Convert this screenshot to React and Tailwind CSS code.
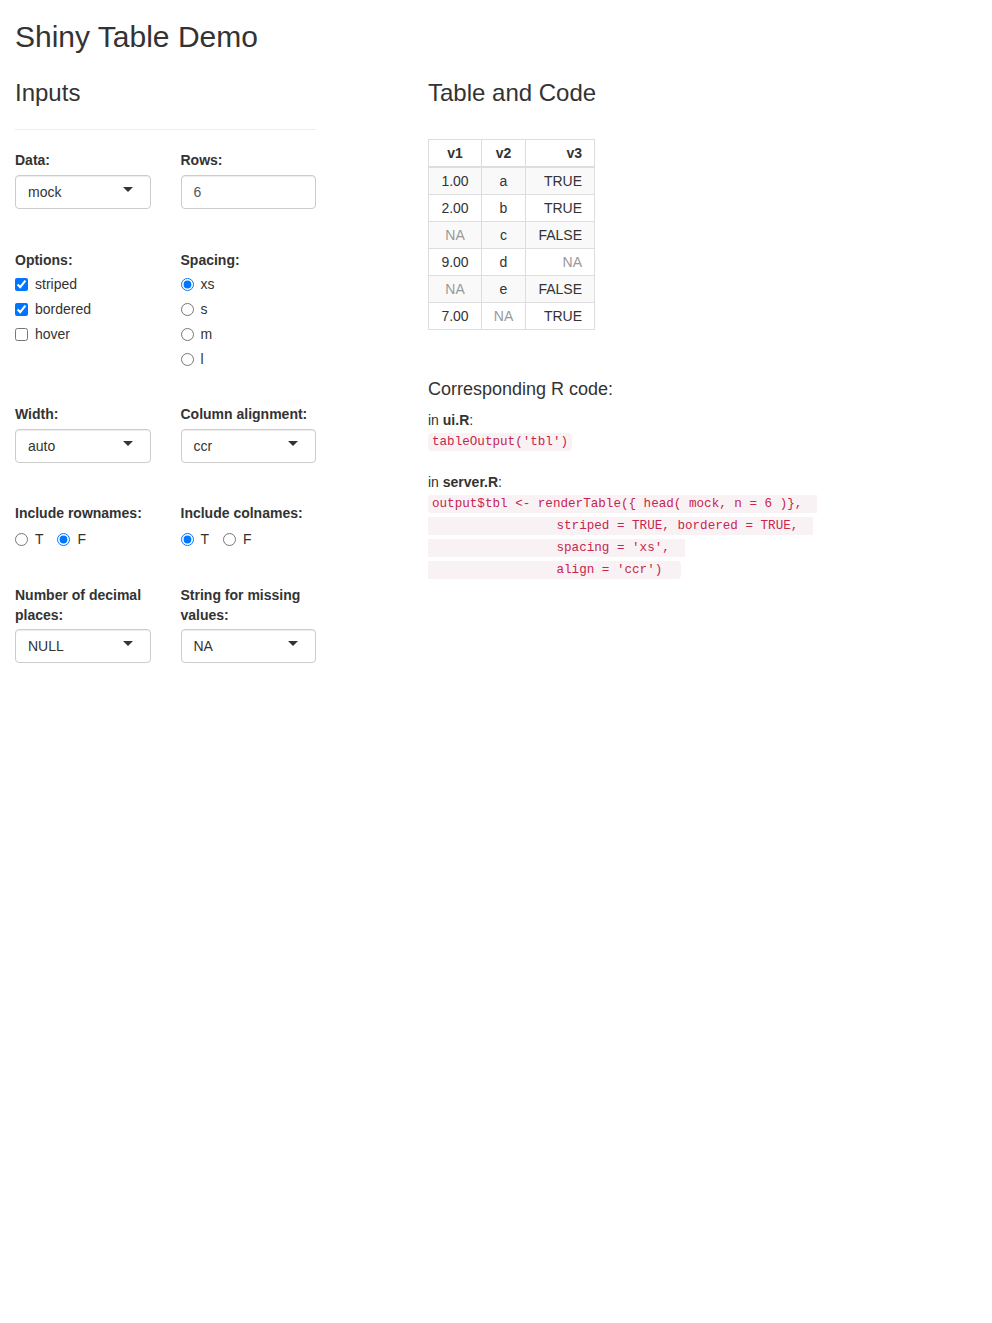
import React from "react";

const rows = [
  ["1.00", "a", "TRUE"],
  ["2.00", "b", "TRUE"],
  ["NA", "c", "FALSE"],
  ["9.00", "d", "NA"],
  ["NA", "e", "FALSE"],
  ["7.00", "NA", "TRUE"],
];

const pad = " ".repeat(17);
const serverCode = [
  "output$tbl <- renderTable({ head( mock, n = 6 )},  ",
  pad + "striped = TRUE, bordered = TRUE,  ",
  pad + "spacing = 'xs',  ",
  pad + "align = 'ccr')  ",
];

function Label({ children }) {
  return <div className="font-bold leading-[20px]">{children}</div>;
}

function Select({ value, top = "mt-[5px]" }) {
  return (
    <div className={top + " h-[34px] border border-[#ccc] rounded-[4px] pl-[12px] pr-[17px] flex items-center justify-between shadow-[inset_0_1px_1px_rgba(0,0,0,0.075)]"}>
      <span>{value}</span>
      <span className="mb-[6px] w-0 h-0 border-l-[5px] border-r-[5px] border-t-[5px] border-l-transparent border-r-transparent border-t-[#333]" />
    </div>
  );
}

function Check({ label, checked }) {
  return (
    <label className="flex items-center h-[20px]">
      <span className="w-[20px] flex items-center">
        <input type="checkbox" className="m-0" defaultChecked={checked} />
      </span>
      {label}
    </label>
  );
}

function Radio({ label, checked, name }) {
  return (
    <label className="flex items-center h-[20px]">
      <span className="w-[20px] flex items-center">
        <input type="radio" name={name} className="m-0" defaultChecked={checked} />
      </span>
      {label}
    </label>
  );
}

export default function App() {
  return (
    <div className="min-h-screen bg-white px-[15px] text-[14px] text-[#333] font-['Liberation_Sans',Arial,sans-serif]">
      <h2 className="pt-[20px] text-[30px] leading-[33px]">Shiny Table Demo</h2>

      <div className="flex mt-[27px]">
        {/* sidebar */}
        <div className="w-[301px] shrink-0">
          <h3 className="text-[24px] leading-[26.4px]">Inputs</h3>
          <div className="mt-[22.6px] h-px bg-[#eee]" />

          <div className="mt-[20px] grid grid-cols-2 gap-x-[30px]">
            <div>
              <Label>Data:</Label>
              <Select value="mock" />
            </div>
            <div>
              <Label>Rows:</Label>
              <div className="mt-[5px] h-[34px] border border-[#ccc] rounded-[4px] px-[12px] flex items-center text-[#555] shadow-[inset_0_1px_1px_rgba(0,0,0,0.075)]">
                6
              </div>
            </div>
          </div>

          <div className="mt-[41px] grid grid-cols-2 gap-x-[30px]">
            <div>
              <Label>Options:</Label>
              <div className="mt-[4px] flex flex-col gap-[5px]">
                <Check label="striped" checked />
                <Check label="bordered" checked />
                <Check label="hover" />
              </div>
            </div>
            <div>
              <Label>Spacing:</Label>
              <div className="mt-[4px] flex flex-col gap-[5px]">
                <Radio name="spacing" label="xs" checked />
                <Radio name="spacing" label="s" />
                <Radio name="spacing" label="m" />
                <Radio name="spacing" label="l" />
              </div>
            </div>
          </div>

          <div className="mt-[35px] grid grid-cols-2 gap-x-[30px]">
            <div>
              <Label>Width:</Label>
              <Select value="auto" />
            </div>
            <div>
              <Label>Column alignment:</Label>
              <Select value="ccr" />
            </div>
          </div>

          <div className="mt-[40px] grid grid-cols-2 gap-x-[30px]">
            <div>
              <Label>Include rownames:</Label>
              <div className="mt-[6px] flex gap-x-[13.9px]">
                <Radio name="rown" label="T" />
                <Radio name="rown" label="F" checked />
              </div>
            </div>
            <div>
              <Label>Include colnames:</Label>
              <div className="mt-[6px] flex gap-x-[13.9px]">
                <Radio name="coln" label="T" checked />
                <Radio name="coln" label="F" />
              </div>
            </div>
          </div>

          <div className="mt-[36px] grid grid-cols-2 gap-x-[30px]">
            <div>
              <Label>Number of decimal places:</Label>
              <Select value="NULL" top="mt-[4px]" />
            </div>
            <div>
              <Label>String for missing values:</Label>
              <Select value="NA" top="mt-[4px]" />
            </div>
          </div>
        </div>

        {/* main */}
        <div className="ml-[112px] flex-1">
          <h3 className="text-[24px] leading-[26.4px]">Table and Code</h3>

          <table className="mt-[33px] table-fixed border-collapse w-[166px] leading-[20px]">
            <thead>
              <tr>
                <th className="w-[53px] border border-[#ddd] border-b-2 py-[3px] text-center">v1</th>
                <th className="w-[44px] border border-[#ddd] border-b-2 py-[3px] text-center">v2</th>
                <th className="w-[69px] border border-[#ddd] border-b-2 py-[3px] pr-[12px] text-right">v3</th>
              </tr>
            </thead>
            <tbody>
              {rows.map((r, i) => (
                <tr key={i} className={i % 2 === 0 ? "bg-[#f9f9f9]" : ""}>
                  {r.map((c, j) => (
                    <td
                      key={j}
                      className={
                        "border border-[#ddd] py-[3px] " +
                        (j === 2 ? "text-right pr-[12px] " : "text-center ") +
                        (c === "NA" ? "text-[#999]" : "")
                      }
                    >
                      {c}
                    </td>
                  ))}
                </tr>
              ))}
            </tbody>
          </table>

          <h4 className="mt-[50px] text-[18px] leading-[19.8px]">Corresponding R code:</h4>

          <div className="mt-[10px] leading-[20px]">
            <div>
              in <b>ui.R</b>:
            </div>
            <div>
              <code className="px-[4px] py-[2px] rounded-[4px] bg-[#f9f2f4] text-[#c7254e] text-[12.6px] font-['Liberation_Mono',monospace]">
                tableOutput('tbl')
              </code>
            </div>
            <div className="mt-[20px]">
              in <b>server.R</b>:
            </div>
          </div>

          <div className="mt-[1px] font-['Liberation_Mono',monospace] text-[12.6px] text-[#c7254e]">
            {serverCode.map((line, i) => (
              <div key={i} className="h-[22px] flex items-center">
                <span
                  className={
                    "inline-block h-[18px] leading-[18px] bg-[#f9f2f4] whitespace-pre " +
                    (i === 0 ? "pl-[4px] rounded-l-[4px] " : "") +
                    (i === serverCode.length - 1 ? "pr-[4px] rounded-r-[4px]" : "")
                  }
                >
                  {line}
                </span>
              </div>
            ))}
          </div>
        </div>
      </div>
    </div>
  );
}
